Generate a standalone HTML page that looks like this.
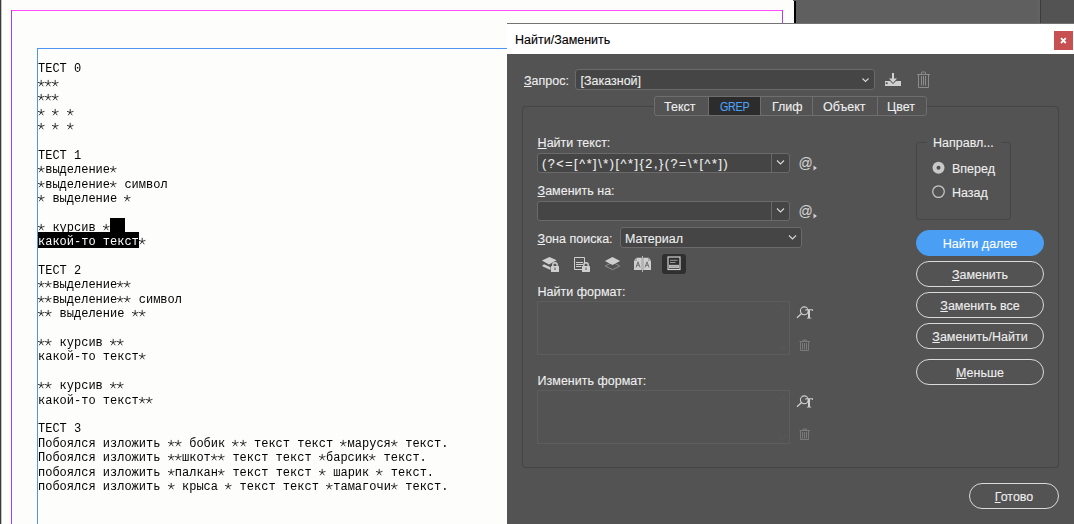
<!DOCTYPE html>
<html><head><meta charset="utf-8">
<style>
*{margin:0;padding:0;box-sizing:border-box}
html,body{width:1074px;height:524px;overflow:hidden;background:#fdfdfc;position:relative}
.abs{position:absolute}
#doc{position:absolute;left:38px;top:0;will-change:transform;font-family:"Liberation Mono",monospace;font-size:12px;line-height:14.4px;color:#000;white-space:pre}
.ln{position:absolute;left:0;white-space:pre}
.st{display:inline-block;width:7.2px;height:14.4px;vertical-align:top}
.sel{background:#000;color:#fff}
#dlg{position:absolute;left:507px;top:23px;width:567px;height:501px;background:#535353;font-family:"Liberation Sans",sans-serif;font-size:12.5px;color:#efefef;-webkit-text-stroke:0.1px}
#title{position:absolute;left:0;top:0;width:567px;height:31px;background:#fff;border-top:1px solid rgba(0,0,0,0.55)}
.t{position:absolute;white-space:nowrap;line-height:17px}
.u{text-decoration:underline;text-underline-offset:1px;text-decoration-thickness:1px}
.box{position:absolute;border:1px solid #6a6a6a;background:#454545;border-radius:3px}
.btn{position:absolute;left:409px;width:128px;height:26px;border:1.5px solid #dadada;border-radius:13px;text-align:center;line-height:27px;color:#efefef;-webkit-text-stroke:0.1px}
</style></head><body>
<!-- left dark bar -->
<div class="abs" style="left:0;top:0;width:1px;height:524px;background:#3a3a3a"></div><div class="abs" style="left:1px;top:0;width:1px;height:524px;background:#c4c4c4"></div>
<!-- margin guides -->
<div class="abs" style="left:11px;top:10px;width:772px;height:1px;background:#ff4dff"></div>
<div class="abs" style="left:11px;top:10px;width:1px;height:514px;background:#a040ff"></div>
<div class="abs" style="left:782px;top:10px;width:1px;height:13px;background:#a040ff"></div>
<!-- text frame -->
<div class="abs" style="left:37px;top:48px;width:470px;height:1px;background:#4d95f2"></div>
<div class="abs" style="left:37px;top:48px;width:1px;height:476px;background:#4d95f2"></div>
<!-- right top gray -->
<div class="abs" style="left:793.5px;top:1px;width:2.5px;height:22px;background:#000"></div><div class="abs" style="left:793px;top:0;width:3px;height:1px;background:#5f5f5f"></div>
<div class="abs" style="left:796px;top:0;width:278px;height:23px;background:#5f5f5f"></div>
<div class="abs" style="left:1040px;top:0;width:34px;height:23px;background:#535353"></div><div class="abs" style="left:1040px;top:0;width:1px;height:23px;background:#3c3c3c"></div><div class="abs" style="left:1037px;top:0;width:3px;height:23px;background:#626262"></div>

<div class="abs" style="left:110px;top:218px;width:15px;height:15px;background:#000"></div>
<div class="abs" style="left:38px;top:232.4px;width:101px;height:15.4px;background:#000"></div>
<div id="doc">
<div class="ln" style="top:62px">ТЕСТ 0</div>
<div class="ln" style="top:77px"><svg class="st" viewBox="0 0 72 144"><g stroke="#222" stroke-width="9" stroke-linecap="round" fill="none"><path d="M32 64 L32.0 33.0 M32 64 L61.5 54.4 M32 64 L50.2 89.1 M32 64 L13.8 89.1 M32 64 L2.5 54.4"/></g></svg><svg class="st" viewBox="0 0 72 144"><g stroke="#222" stroke-width="9" stroke-linecap="round" fill="none"><path d="M32 64 L32.0 33.0 M32 64 L61.5 54.4 M32 64 L50.2 89.1 M32 64 L13.8 89.1 M32 64 L2.5 54.4"/></g></svg><svg class="st" viewBox="0 0 72 144"><g stroke="#222" stroke-width="9" stroke-linecap="round" fill="none"><path d="M32 64 L32.0 33.0 M32 64 L61.5 54.4 M32 64 L50.2 89.1 M32 64 L13.8 89.1 M32 64 L2.5 54.4"/></g></svg></div>
<div class="ln" style="top:91px"><svg class="st" viewBox="0 0 72 144"><g stroke="#222" stroke-width="9" stroke-linecap="round" fill="none"><path d="M32 64 L32.0 33.0 M32 64 L61.5 54.4 M32 64 L50.2 89.1 M32 64 L13.8 89.1 M32 64 L2.5 54.4"/></g></svg><svg class="st" viewBox="0 0 72 144"><g stroke="#222" stroke-width="9" stroke-linecap="round" fill="none"><path d="M32 64 L32.0 33.0 M32 64 L61.5 54.4 M32 64 L50.2 89.1 M32 64 L13.8 89.1 M32 64 L2.5 54.4"/></g></svg><svg class="st" viewBox="0 0 72 144"><g stroke="#222" stroke-width="9" stroke-linecap="round" fill="none"><path d="M32 64 L32.0 33.0 M32 64 L61.5 54.4 M32 64 L50.2 89.1 M32 64 L13.8 89.1 M32 64 L2.5 54.4"/></g></svg></div>
<div class="ln" style="top:106px"><svg class="st" viewBox="0 0 72 144"><g stroke="#222" stroke-width="9" stroke-linecap="round" fill="none"><path d="M32 64 L32.0 33.0 M32 64 L61.5 54.4 M32 64 L50.2 89.1 M32 64 L13.8 89.1 M32 64 L2.5 54.4"/></g></svg> <svg class="st" viewBox="0 0 72 144"><g stroke="#222" stroke-width="9" stroke-linecap="round" fill="none"><path d="M32 64 L32.0 33.0 M32 64 L61.5 54.4 M32 64 L50.2 89.1 M32 64 L13.8 89.1 M32 64 L2.5 54.4"/></g></svg> <svg class="st" viewBox="0 0 72 144"><g stroke="#222" stroke-width="9" stroke-linecap="round" fill="none"><path d="M32 64 L32.0 33.0 M32 64 L61.5 54.4 M32 64 L50.2 89.1 M32 64 L13.8 89.1 M32 64 L2.5 54.4"/></g></svg></div>
<div class="ln" style="top:120px"><svg class="st" viewBox="0 0 72 144"><g stroke="#222" stroke-width="9" stroke-linecap="round" fill="none"><path d="M32 64 L32.0 33.0 M32 64 L61.5 54.4 M32 64 L50.2 89.1 M32 64 L13.8 89.1 M32 64 L2.5 54.4"/></g></svg> <svg class="st" viewBox="0 0 72 144"><g stroke="#222" stroke-width="9" stroke-linecap="round" fill="none"><path d="M32 64 L32.0 33.0 M32 64 L61.5 54.4 M32 64 L50.2 89.1 M32 64 L13.8 89.1 M32 64 L2.5 54.4"/></g></svg> <svg class="st" viewBox="0 0 72 144"><g stroke="#222" stroke-width="9" stroke-linecap="round" fill="none"><path d="M32 64 L32.0 33.0 M32 64 L61.5 54.4 M32 64 L50.2 89.1 M32 64 L13.8 89.1 M32 64 L2.5 54.4"/></g></svg></div>
<div class="ln" style="top:149px">ТЕСТ 1</div>
<div class="ln" style="top:163px"><svg class="st" viewBox="0 0 72 144"><g stroke="#222" stroke-width="9" stroke-linecap="round" fill="none"><path d="M32 64 L32.0 33.0 M32 64 L61.5 54.4 M32 64 L50.2 89.1 M32 64 L13.8 89.1 M32 64 L2.5 54.4"/></g></svg>выделение<svg class="st" viewBox="0 0 72 144"><g stroke="#222" stroke-width="9" stroke-linecap="round" fill="none"><path d="M32 64 L32.0 33.0 M32 64 L61.5 54.4 M32 64 L50.2 89.1 M32 64 L13.8 89.1 M32 64 L2.5 54.4"/></g></svg></div>
<div class="ln" style="top:178px"><svg class="st" viewBox="0 0 72 144"><g stroke="#222" stroke-width="9" stroke-linecap="round" fill="none"><path d="M32 64 L32.0 33.0 M32 64 L61.5 54.4 M32 64 L50.2 89.1 M32 64 L13.8 89.1 M32 64 L2.5 54.4"/></g></svg>выделение<svg class="st" viewBox="0 0 72 144"><g stroke="#222" stroke-width="9" stroke-linecap="round" fill="none"><path d="M32 64 L32.0 33.0 M32 64 L61.5 54.4 M32 64 L50.2 89.1 M32 64 L13.8 89.1 M32 64 L2.5 54.4"/></g></svg> символ</div>
<div class="ln" style="top:192px"><svg class="st" viewBox="0 0 72 144"><g stroke="#222" stroke-width="9" stroke-linecap="round" fill="none"><path d="M32 64 L32.0 33.0 M32 64 L61.5 54.4 M32 64 L50.2 89.1 M32 64 L13.8 89.1 M32 64 L2.5 54.4"/></g></svg> выделение <svg class="st" viewBox="0 0 72 144"><g stroke="#222" stroke-width="9" stroke-linecap="round" fill="none"><path d="M32 64 L32.0 33.0 M32 64 L61.5 54.4 M32 64 L50.2 89.1 M32 64 L13.8 89.1 M32 64 L2.5 54.4"/></g></svg></div>
<div class="ln" style="top:221px"><svg class="st" viewBox="0 0 72 144"><g stroke="#222" stroke-width="9" stroke-linecap="round" fill="none"><path d="M32 64 L32.0 33.0 M32 64 L61.5 54.4 M32 64 L50.2 89.1 M32 64 L13.8 89.1 M32 64 L2.5 54.4"/></g></svg> курсив <svg class="st" viewBox="0 0 72 144"><g stroke="#222" stroke-width="9" stroke-linecap="round" fill="none"><path d="M32 64 L32.0 33.0 M32 64 L61.5 54.4 M32 64 L50.2 89.1 M32 64 L13.8 89.1 M32 64 L2.5 54.4"/></g></svg></div>
<div class="ln" style="top:235px"><span style="color:#fff">какой-то текст</span><svg class="st" viewBox="0 0 72 144"><g stroke="#222" stroke-width="9" stroke-linecap="round" fill="none"><path d="M32 64 L32.0 33.0 M32 64 L61.5 54.4 M32 64 L50.2 89.1 M32 64 L13.8 89.1 M32 64 L2.5 54.4"/></g></svg></div>
<div class="ln" style="top:264px">ТЕСТ 2</div>
<div class="ln" style="top:278px"><svg class="st" viewBox="0 0 72 144"><g stroke="#222" stroke-width="9" stroke-linecap="round" fill="none"><path d="M32 64 L32.0 33.0 M32 64 L61.5 54.4 M32 64 L50.2 89.1 M32 64 L13.8 89.1 M32 64 L2.5 54.4"/></g></svg><svg class="st" viewBox="0 0 72 144"><g stroke="#222" stroke-width="9" stroke-linecap="round" fill="none"><path d="M32 64 L32.0 33.0 M32 64 L61.5 54.4 M32 64 L50.2 89.1 M32 64 L13.8 89.1 M32 64 L2.5 54.4"/></g></svg>выделение<svg class="st" viewBox="0 0 72 144"><g stroke="#222" stroke-width="9" stroke-linecap="round" fill="none"><path d="M32 64 L32.0 33.0 M32 64 L61.5 54.4 M32 64 L50.2 89.1 M32 64 L13.8 89.1 M32 64 L2.5 54.4"/></g></svg><svg class="st" viewBox="0 0 72 144"><g stroke="#222" stroke-width="9" stroke-linecap="round" fill="none"><path d="M32 64 L32.0 33.0 M32 64 L61.5 54.4 M32 64 L50.2 89.1 M32 64 L13.8 89.1 M32 64 L2.5 54.4"/></g></svg></div>
<div class="ln" style="top:293px"><svg class="st" viewBox="0 0 72 144"><g stroke="#222" stroke-width="9" stroke-linecap="round" fill="none"><path d="M32 64 L32.0 33.0 M32 64 L61.5 54.4 M32 64 L50.2 89.1 M32 64 L13.8 89.1 M32 64 L2.5 54.4"/></g></svg><svg class="st" viewBox="0 0 72 144"><g stroke="#222" stroke-width="9" stroke-linecap="round" fill="none"><path d="M32 64 L32.0 33.0 M32 64 L61.5 54.4 M32 64 L50.2 89.1 M32 64 L13.8 89.1 M32 64 L2.5 54.4"/></g></svg>выделение<svg class="st" viewBox="0 0 72 144"><g stroke="#222" stroke-width="9" stroke-linecap="round" fill="none"><path d="M32 64 L32.0 33.0 M32 64 L61.5 54.4 M32 64 L50.2 89.1 M32 64 L13.8 89.1 M32 64 L2.5 54.4"/></g></svg><svg class="st" viewBox="0 0 72 144"><g stroke="#222" stroke-width="9" stroke-linecap="round" fill="none"><path d="M32 64 L32.0 33.0 M32 64 L61.5 54.4 M32 64 L50.2 89.1 M32 64 L13.8 89.1 M32 64 L2.5 54.4"/></g></svg> символ</div>
<div class="ln" style="top:307px"><svg class="st" viewBox="0 0 72 144"><g stroke="#222" stroke-width="9" stroke-linecap="round" fill="none"><path d="M32 64 L32.0 33.0 M32 64 L61.5 54.4 M32 64 L50.2 89.1 M32 64 L13.8 89.1 M32 64 L2.5 54.4"/></g></svg><svg class="st" viewBox="0 0 72 144"><g stroke="#222" stroke-width="9" stroke-linecap="round" fill="none"><path d="M32 64 L32.0 33.0 M32 64 L61.5 54.4 M32 64 L50.2 89.1 M32 64 L13.8 89.1 M32 64 L2.5 54.4"/></g></svg> выделение <svg class="st" viewBox="0 0 72 144"><g stroke="#222" stroke-width="9" stroke-linecap="round" fill="none"><path d="M32 64 L32.0 33.0 M32 64 L61.5 54.4 M32 64 L50.2 89.1 M32 64 L13.8 89.1 M32 64 L2.5 54.4"/></g></svg><svg class="st" viewBox="0 0 72 144"><g stroke="#222" stroke-width="9" stroke-linecap="round" fill="none"><path d="M32 64 L32.0 33.0 M32 64 L61.5 54.4 M32 64 L50.2 89.1 M32 64 L13.8 89.1 M32 64 L2.5 54.4"/></g></svg></div>
<div class="ln" style="top:336px"><svg class="st" viewBox="0 0 72 144"><g stroke="#222" stroke-width="9" stroke-linecap="round" fill="none"><path d="M32 64 L32.0 33.0 M32 64 L61.5 54.4 M32 64 L50.2 89.1 M32 64 L13.8 89.1 M32 64 L2.5 54.4"/></g></svg><svg class="st" viewBox="0 0 72 144"><g stroke="#222" stroke-width="9" stroke-linecap="round" fill="none"><path d="M32 64 L32.0 33.0 M32 64 L61.5 54.4 M32 64 L50.2 89.1 M32 64 L13.8 89.1 M32 64 L2.5 54.4"/></g></svg> курсив <svg class="st" viewBox="0 0 72 144"><g stroke="#222" stroke-width="9" stroke-linecap="round" fill="none"><path d="M32 64 L32.0 33.0 M32 64 L61.5 54.4 M32 64 L50.2 89.1 M32 64 L13.8 89.1 M32 64 L2.5 54.4"/></g></svg><svg class="st" viewBox="0 0 72 144"><g stroke="#222" stroke-width="9" stroke-linecap="round" fill="none"><path d="M32 64 L32.0 33.0 M32 64 L61.5 54.4 M32 64 L50.2 89.1 M32 64 L13.8 89.1 M32 64 L2.5 54.4"/></g></svg></div>
<div class="ln" style="top:350px">какой-то текст<svg class="st" viewBox="0 0 72 144"><g stroke="#222" stroke-width="9" stroke-linecap="round" fill="none"><path d="M32 64 L32.0 33.0 M32 64 L61.5 54.4 M32 64 L50.2 89.1 M32 64 L13.8 89.1 M32 64 L2.5 54.4"/></g></svg></div>
<div class="ln" style="top:379px"><svg class="st" viewBox="0 0 72 144"><g stroke="#222" stroke-width="9" stroke-linecap="round" fill="none"><path d="M32 64 L32.0 33.0 M32 64 L61.5 54.4 M32 64 L50.2 89.1 M32 64 L13.8 89.1 M32 64 L2.5 54.4"/></g></svg><svg class="st" viewBox="0 0 72 144"><g stroke="#222" stroke-width="9" stroke-linecap="round" fill="none"><path d="M32 64 L32.0 33.0 M32 64 L61.5 54.4 M32 64 L50.2 89.1 M32 64 L13.8 89.1 M32 64 L2.5 54.4"/></g></svg> курсив <svg class="st" viewBox="0 0 72 144"><g stroke="#222" stroke-width="9" stroke-linecap="round" fill="none"><path d="M32 64 L32.0 33.0 M32 64 L61.5 54.4 M32 64 L50.2 89.1 M32 64 L13.8 89.1 M32 64 L2.5 54.4"/></g></svg><svg class="st" viewBox="0 0 72 144"><g stroke="#222" stroke-width="9" stroke-linecap="round" fill="none"><path d="M32 64 L32.0 33.0 M32 64 L61.5 54.4 M32 64 L50.2 89.1 M32 64 L13.8 89.1 M32 64 L2.5 54.4"/></g></svg></div>
<div class="ln" style="top:394px">какой-то текст<svg class="st" viewBox="0 0 72 144"><g stroke="#222" stroke-width="9" stroke-linecap="round" fill="none"><path d="M32 64 L32.0 33.0 M32 64 L61.5 54.4 M32 64 L50.2 89.1 M32 64 L13.8 89.1 M32 64 L2.5 54.4"/></g></svg><svg class="st" viewBox="0 0 72 144"><g stroke="#222" stroke-width="9" stroke-linecap="round" fill="none"><path d="M32 64 L32.0 33.0 M32 64 L61.5 54.4 M32 64 L50.2 89.1 M32 64 L13.8 89.1 M32 64 L2.5 54.4"/></g></svg></div>
<div class="ln" style="top:422px">ТЕСТ 3</div>
<div class="ln" style="top:437px">Побоялся изложить <svg class="st" viewBox="0 0 72 144"><g stroke="#222" stroke-width="9" stroke-linecap="round" fill="none"><path d="M32 64 L32.0 33.0 M32 64 L61.5 54.4 M32 64 L50.2 89.1 M32 64 L13.8 89.1 M32 64 L2.5 54.4"/></g></svg><svg class="st" viewBox="0 0 72 144"><g stroke="#222" stroke-width="9" stroke-linecap="round" fill="none"><path d="M32 64 L32.0 33.0 M32 64 L61.5 54.4 M32 64 L50.2 89.1 M32 64 L13.8 89.1 M32 64 L2.5 54.4"/></g></svg> бобик <svg class="st" viewBox="0 0 72 144"><g stroke="#222" stroke-width="9" stroke-linecap="round" fill="none"><path d="M32 64 L32.0 33.0 M32 64 L61.5 54.4 M32 64 L50.2 89.1 M32 64 L13.8 89.1 M32 64 L2.5 54.4"/></g></svg><svg class="st" viewBox="0 0 72 144"><g stroke="#222" stroke-width="9" stroke-linecap="round" fill="none"><path d="M32 64 L32.0 33.0 M32 64 L61.5 54.4 M32 64 L50.2 89.1 M32 64 L13.8 89.1 M32 64 L2.5 54.4"/></g></svg> текст текст <svg class="st" viewBox="0 0 72 144"><g stroke="#222" stroke-width="9" stroke-linecap="round" fill="none"><path d="M32 64 L32.0 33.0 M32 64 L61.5 54.4 M32 64 L50.2 89.1 M32 64 L13.8 89.1 M32 64 L2.5 54.4"/></g></svg>маруся<svg class="st" viewBox="0 0 72 144"><g stroke="#222" stroke-width="9" stroke-linecap="round" fill="none"><path d="M32 64 L32.0 33.0 M32 64 L61.5 54.4 M32 64 L50.2 89.1 M32 64 L13.8 89.1 M32 64 L2.5 54.4"/></g></svg> текст.</div>
<div class="ln" style="top:451px">Побоялся изложить <svg class="st" viewBox="0 0 72 144"><g stroke="#222" stroke-width="9" stroke-linecap="round" fill="none"><path d="M32 64 L32.0 33.0 M32 64 L61.5 54.4 M32 64 L50.2 89.1 M32 64 L13.8 89.1 M32 64 L2.5 54.4"/></g></svg><svg class="st" viewBox="0 0 72 144"><g stroke="#222" stroke-width="9" stroke-linecap="round" fill="none"><path d="M32 64 L32.0 33.0 M32 64 L61.5 54.4 M32 64 L50.2 89.1 M32 64 L13.8 89.1 M32 64 L2.5 54.4"/></g></svg>шкот<svg class="st" viewBox="0 0 72 144"><g stroke="#222" stroke-width="9" stroke-linecap="round" fill="none"><path d="M32 64 L32.0 33.0 M32 64 L61.5 54.4 M32 64 L50.2 89.1 M32 64 L13.8 89.1 M32 64 L2.5 54.4"/></g></svg><svg class="st" viewBox="0 0 72 144"><g stroke="#222" stroke-width="9" stroke-linecap="round" fill="none"><path d="M32 64 L32.0 33.0 M32 64 L61.5 54.4 M32 64 L50.2 89.1 M32 64 L13.8 89.1 M32 64 L2.5 54.4"/></g></svg> текст текст <svg class="st" viewBox="0 0 72 144"><g stroke="#222" stroke-width="9" stroke-linecap="round" fill="none"><path d="M32 64 L32.0 33.0 M32 64 L61.5 54.4 M32 64 L50.2 89.1 M32 64 L13.8 89.1 M32 64 L2.5 54.4"/></g></svg>барсик<svg class="st" viewBox="0 0 72 144"><g stroke="#222" stroke-width="9" stroke-linecap="round" fill="none"><path d="M32 64 L32.0 33.0 M32 64 L61.5 54.4 M32 64 L50.2 89.1 M32 64 L13.8 89.1 M32 64 L2.5 54.4"/></g></svg> текст.</div>
<div class="ln" style="top:466px">побоялся изложить <svg class="st" viewBox="0 0 72 144"><g stroke="#222" stroke-width="9" stroke-linecap="round" fill="none"><path d="M32 64 L32.0 33.0 M32 64 L61.5 54.4 M32 64 L50.2 89.1 M32 64 L13.8 89.1 M32 64 L2.5 54.4"/></g></svg>палкан<svg class="st" viewBox="0 0 72 144"><g stroke="#222" stroke-width="9" stroke-linecap="round" fill="none"><path d="M32 64 L32.0 33.0 M32 64 L61.5 54.4 M32 64 L50.2 89.1 M32 64 L13.8 89.1 M32 64 L2.5 54.4"/></g></svg> текст текст <svg class="st" viewBox="0 0 72 144"><g stroke="#222" stroke-width="9" stroke-linecap="round" fill="none"><path d="M32 64 L32.0 33.0 M32 64 L61.5 54.4 M32 64 L50.2 89.1 M32 64 L13.8 89.1 M32 64 L2.5 54.4"/></g></svg> шарик <svg class="st" viewBox="0 0 72 144"><g stroke="#222" stroke-width="9" stroke-linecap="round" fill="none"><path d="M32 64 L32.0 33.0 M32 64 L61.5 54.4 M32 64 L50.2 89.1 M32 64 L13.8 89.1 M32 64 L2.5 54.4"/></g></svg> текст.</div>
<div class="ln" style="top:480px">побоялся изложить <svg class="st" viewBox="0 0 72 144"><g stroke="#222" stroke-width="9" stroke-linecap="round" fill="none"><path d="M32 64 L32.0 33.0 M32 64 L61.5 54.4 M32 64 L50.2 89.1 M32 64 L13.8 89.1 M32 64 L2.5 54.4"/></g></svg> крыса <svg class="st" viewBox="0 0 72 144"><g stroke="#222" stroke-width="9" stroke-linecap="round" fill="none"><path d="M32 64 L32.0 33.0 M32 64 L61.5 54.4 M32 64 L50.2 89.1 M32 64 L13.8 89.1 M32 64 L2.5 54.4"/></g></svg> текст текст <svg class="st" viewBox="0 0 72 144"><g stroke="#222" stroke-width="9" stroke-linecap="round" fill="none"><path d="M32 64 L32.0 33.0 M32 64 L61.5 54.4 M32 64 L50.2 89.1 M32 64 L13.8 89.1 M32 64 L2.5 54.4"/></g></svg>тамагочи<svg class="st" viewBox="0 0 72 144"><g stroke="#222" stroke-width="9" stroke-linecap="round" fill="none"><path d="M32 64 L32.0 33.0 M32 64 L61.5 54.4 M32 64 L50.2 89.1 M32 64 L13.8 89.1 M32 64 L2.5 54.4"/></g></svg> текст.</div>
</div>

<div id="dlg">
  <div id="title">
    <div class="t" style="left:8px;top:8px;color:#000;font-size:12.5px">Найти/Заменить</div>
    <div class="abs" style="left:547px;top:7px;width:19px;height:19px;background:#c75050"><svg class="abs" style="left:0;top:0" width="19" height="19" viewBox="0 0 19 19"><path d="M7 7.2 L11.8 12 M11.8 7.2 L7 12" stroke="#fff" stroke-width="1.8"/></svg></div>
  </div>

  <!-- query row -->
  <div class="t" style="left:17px;top:50px"><span class="u">З</span>апрос:</div>
  <div class="box" style="left:68px;top:46px;width:300px;height:21px"></div>
  <div class="t" style="left:73.5px;top:50px">[Заказной]</div>
  <svg class="abs" style="left:352px;top:53px" width="12" height="8" viewBox="0 0 12 8"><path d="M3.5 2.5 L6.5 5.5 L9.5 2.5" stroke="#d8d8d8" stroke-width="1.1" fill="none"/></svg>
  <!-- download icon -->
  <svg class="abs" style="left:377px;top:50px" width="18" height="15" viewBox="0 0 18 15"><g fill="#d0d0d0"><rect x="8" y="0" width="2" height="6"/><path d="M5 5.5 L13 5.5 L9 10 Z"/><path d="M1 8 L6 8 L9 11 L12 8 L17 8 L17 13 L1 13 Z"/></g><rect x="1.7" y="9.4" width="2" height="1.7" fill="#555"/></svg>
  <!-- trash icon -->
  <svg class="abs" style="left:409px;top:48px" width="15" height="17" viewBox="0 0 15 17"><g stroke="#8c8c8c" fill="none" stroke-width="1"><path d="M1 3.5 H14"/><path d="M5.5 3.5 V2 Q5.5 1 6.5 1 H8.5 Q9.5 1 9.5 2 V3.5"/><path d="M2.5 3.5 V16.5 H12.5 V3.5"/><path d="M5.5 5 V14.5 M7.5 5 V14.5 M9.5 5 V14.5"/></g></svg>

  <!-- panel -->
  <div class="abs" style="left:15px;top:83px;width:536.5px;height:362px;border:1px solid #464646;border-radius:4px;box-shadow:0 0 1px #4c4c4c"></div>
  <!-- tabs -->
  <div class="abs" style="left:147px;top:73px;width:273px;height:20px;border:1px solid #6e6e6e;border-radius:3px;background:#535353;overflow:hidden">
    <div class="abs" style="left:54px;top:0;width:51px;height:18px;background:#2c2c2c"></div>
    <div class="abs" style="left:53px;top:0;width:1px;height:18px;background:#6e6e6e"></div>
    <div class="abs" style="left:105px;top:0;width:1px;height:18px;background:#6e6e6e"></div>
    <div class="abs" style="left:157px;top:0;width:1px;height:18px;background:#6e6e6e"></div>
    <div class="abs" style="left:222px;top:0;width:1px;height:18px;background:#6e6e6e"></div>
  </div>
  <div class="t" style="left:157px;top:76px">Текст</div>
  <div class="t" style="left:213px;top:76px;color:#4ea2f7;letter-spacing:-0.3px;font-size:12.5px;transform:scaleX(0.86);transform-origin:0 0">GREP</div>
  <div class="t" style="left:265px;top:76px">Глиф</div>
  <div class="t" style="left:316px;top:76px">Объект</div>
  <div class="t" style="left:380px;top:76px">Цвет</div>

  <!-- find text -->
  <div class="t" style="left:30.6px;top:112px"><span class="u">Н</span>айти текст:</div>
  <div class="box" style="left:30px;top:129.5px;width:252.5px;height:20px"></div>
  <div class="abs" style="left:264px;top:130px;width:1px;height:19px;background:#6a6a6a"></div>
  <svg class="abs" style="left:267px;top:135px" width="12" height="8" viewBox="0 0 12 8"><path d="M3 2.5 L6.5 6 L10 2.5" stroke="#d8d8d8" stroke-width="1.1" fill="none"/></svg>
  <div class="t" style="left:35px;top:132.5px;letter-spacing:1.6px">(?&lt;=[^*]\*)[^*]{2,}(?=\*[^*])</div>
  <div class="t" style="left:291.5px;top:132px;font-size:14px;color:#d2d2d2">@</div>
  <svg class="abs" style="left:306px;top:141.5px" width="5" height="6" viewBox="0 0 5 6"><path d="M0.5 0.5 L4 3 L0.5 5.5 Z" fill="#cfcfcf"/></svg>

  <!-- replace -->
  <div class="t" style="left:30.6px;top:160px"><span class="u">З</span>аменить на:</div>
  <div class="box" style="left:30px;top:177.5px;width:252.5px;height:20px"></div>
  <div class="abs" style="left:264px;top:178px;width:1px;height:19px;background:#6a6a6a"></div>
  <svg class="abs" style="left:267px;top:183px" width="12" height="8" viewBox="0 0 12 8"><path d="M3 2.5 L6.5 6 L10 2.5" stroke="#d8d8d8" stroke-width="1.1" fill="none"/></svg>
  <div class="t" style="left:291.5px;top:180px;font-size:14px;color:#d2d2d2">@</div>
  <svg class="abs" style="left:306px;top:189.5px" width="5" height="6" viewBox="0 0 5 6"><path d="M0.5 0.5 L4 3 L0.5 5.5 Z" fill="#cfcfcf"/></svg>

  <!-- zone -->
  <div class="t" style="left:30.6px;top:208px"><span class="u">З</span>она поиска:</div>
  <div class="box" style="left:113px;top:204px;width:182px;height:21px"></div>
  <div class="t" style="left:118px;top:208px">Материал</div>
  <svg class="abs" style="left:279px;top:210px" width="12" height="8" viewBox="0 0 12 8"><path d="M3 2.5 L6.5 6 L10 2.5" stroke="#d8d8d8" stroke-width="1.1" fill="none"/></svg>

  <!-- zone icons -->
  <svg class="abs" style="left:34px;top:233px" width="20" height="17" viewBox="0 0 20 17"><g fill="#cfcfcf"><path d="M0.9 4.5 L8.5 1 L15.7 4.3 L8 8.5 Z"/><path d="M0.9 10 L3 8.3 L9.5 11.3 L9.5 14 Z"/><rect x="10" y="10" width="8" height="6" rx="0.5"/></g><path d="M11.8 10 V8.9 A2.2 2.2 0 0 1 16.2 8.9 V10" stroke="#cfcfcf" stroke-width="1.4" fill="none"/><rect x="13.5" y="11.5" width="1" height="2.5" fill="#555"/></svg>
  <svg class="abs" style="left:66px;top:233px" width="20" height="17" viewBox="0 0 20 17"><g stroke="#cfcfcf" fill="none" stroke-width="1"><path d="M9 13.5 H1.5 V1.5 H11.5 V7"/><path d="M3 6.5 H10 M3 8.5 H10 M3 10.5 H8.5"/></g><g fill="#cfcfcf"><rect x="9" y="10" width="8" height="6" rx="0.5"/></g><path d="M10.8 10 V8.9 A2.2 2.2 0 0 1 15.2 8.9 V10" stroke="#cfcfcf" stroke-width="1.4" fill="none"/><rect x="12.5" y="11.5" width="1" height="2.5" fill="#555"/></svg>
  <svg class="abs" style="left:97px;top:233px" width="17" height="16" viewBox="0 0 17 16"><path d="M1.2 10 L8.5 6.3 L15.8 10 L8.5 13.7 Z" stroke="#8e8e8e" stroke-width="1" fill="none"/><path d="M0.9 5 L8.5 1 L16.1 5 L8.5 9 Z" fill="#cfcfcf"/></svg>
  <svg class="abs" style="left:126px;top:232px" width="19" height="18" viewBox="0 0 19 18"><g fill="#cfcfcf"><path d="M1 5.5 L3.5 2.8 H8.8 V15.1 H1 Z"/><path d="M10.2 2.8 H15.5 L18 5.5 V15.1 H10.2 Z"/><rect x="9.1" y="1" width="0.8" height="16"/></g><path d="M1 5.5 H3.5 V2.8" stroke="#8a8a8a" stroke-width="0.6" fill="none"/><path d="M18 5.5 H15.5 V2.8" stroke="#8a8a8a" stroke-width="0.6" fill="none"/><g stroke="#5a5a5a" stroke-width="0.8" fill="none"><path d="M3 12.5 L5 6.8 L7 12.5 M3.8 10.3 H6.2"/><path d="M12 12.5 L14 6.8 L16 12.5 M12.8 10.3 H15.2"/></g></svg>
  <div class="abs" style="left:155px;top:230.5px;width:24px;height:20px;background:#2f2f2f;border-radius:3px"></div>
  <svg class="abs" style="left:160px;top:233px" width="14" height="15" viewBox="0 0 14 15"><rect x="1" y="1" width="12" height="12.5" stroke="#d0d0d0" stroke-width="1.2" fill="none"/><path d="M3 4.3 H10.5 M3 6.5 H8.5" stroke="#a8a8a8" stroke-width="0.9"/><rect x="2.5" y="9.3" width="9" height="2.4" stroke="#c8c8c8" stroke-width="0.9" fill="#a8a8a8"/></svg>

  <!-- find format -->
  <div class="t" style="left:30.6px;top:261px">Найти формат:</div>
  <div class="abs" style="left:30px;top:278px;width:253px;height:54px;border:1px solid #5d5d5d;background:#535353"></div><svg class="abs" style="left:271px;top:282px" width="10" height="46" viewBox="0 0 10 46"><path d="M1.5 6 L5 2.5 L8.5 6 M1.5 41 L5 44.5 L8.5 41" stroke="#5a5a5a" stroke-width="1" fill="none"/></svg>
  <svg class="abs" style="left:289px;top:282.5px" width="18" height="13" viewBox="0 0 18 13"><circle cx="8.3" cy="4.8" r="3.9" stroke="#cfcfcf" stroke-width="1.1" fill="none"/><path d="M5.3 7.8 L1 11.8" stroke="#cfcfcf" stroke-width="1.3"/><path d="M9.5 3.3 H17 V5 H16.3 L16 4.3 H14 V11.5 L15.3 12 V12.6 H10.8 V12 L12 11.5 V4.3 H10.3 L10 5 H9.5 Z" fill="#d0d0d0"/></svg>
  <svg class="abs" style="left:292px;top:316px" width="12" height="13" viewBox="0 0 12 13"><g stroke="#7a7a7a" fill="none" stroke-width="1"><path d="M0.5 2.5 H11"/><path d="M4 2.5 V1 H7.5 V2.5"/><path d="M1.5 2.5 V11.5 H9.5 V2.5"/><path d="M3.5 4 V10.5 M5.5 4 V10.5 M7.5 4 V10.5"/></g></svg>

  <!-- change format -->
  <div class="t" style="left:30.6px;top:349.5px">Изменить формат:</div>
  <div class="abs" style="left:30px;top:367px;width:253px;height:54px;border:1px solid #5d5d5d;background:#535353"></div><svg class="abs" style="left:271px;top:371px" width="10" height="46" viewBox="0 0 10 46"><path d="M1.5 6 L5 2.5 L8.5 6 M1.5 41 L5 44.5 L8.5 41" stroke="#5a5a5a" stroke-width="1" fill="none"/></svg>
  <svg class="abs" style="left:289px;top:371.5px" width="18" height="13" viewBox="0 0 18 13"><circle cx="8.3" cy="4.8" r="3.9" stroke="#cfcfcf" stroke-width="1.1" fill="none"/><path d="M5.3 7.8 L1 11.8" stroke="#cfcfcf" stroke-width="1.3"/><path d="M9.5 3.3 H17 V5 H16.3 L16 4.3 H14 V11.5 L15.3 12 V12.6 H10.8 V12 L12 11.5 V4.3 H10.3 L10 5 H9.5 Z" fill="#d0d0d0"/></svg>
  <svg class="abs" style="left:292px;top:405px" width="12" height="13" viewBox="0 0 12 13"><g stroke="#7a7a7a" fill="none" stroke-width="1"><path d="M0.5 2.5 H11"/><path d="M4 2.5 V1 H7.5 V2.5"/><path d="M1.5 2.5 V11.5 H9.5 V2.5"/><path d="M3.5 4 V10.5 M5.5 4 V10.5 M7.5 4 V10.5"/></g></svg>

  <!-- direction group -->
  <div class="abs" style="left:409px;top:119px;width:94.5px;height:78px;border:1px solid #464646;border-radius:3px"></div>
  <div class="abs" style="left:420px;top:114px;width:74px;height:10px;background:#535353"></div>
  <div class="t" style="left:426px;top:112.4px">Направл...</div>
  <svg class="abs" style="left:424px;top:137px" width="15" height="40" viewBox="0 0 15 40"><circle cx="7.5" cy="7.7" r="6" fill="#c9c9c9"/><circle cx="7.5" cy="7.7" r="2" fill="#505050"/><circle cx="7.5" cy="31.6" r="5.8" stroke="#c9c9c9" stroke-width="1.2" fill="none"/></svg>
  <div class="t" style="left:445px;top:138.2px">Вперед</div>
  <div class="t" style="left:445px;top:162px">Назад</div>

  <!-- buttons -->
  <div class="btn" style="top:207px;background:#4a9ff5;border-color:#4a9ff5;color:#fff">Найти <span class="u">д</span>алее</div>
  <div class="btn" style="top:238px"><span class="u">З</span>аменить</div>
  <div class="btn" style="top:269px"><span class="u">З</span>аменить все</div>
  <div class="btn" style="top:300px"><span class="u">З</span>аменить/Найти</div>
  <div class="btn" style="top:336px"><span class="u">М</span>еньше</div>
  <div class="btn" style="top:460px;left:462px;width:90px"><span class="u">Г</span>отово</div>
</div>
</body></html>
